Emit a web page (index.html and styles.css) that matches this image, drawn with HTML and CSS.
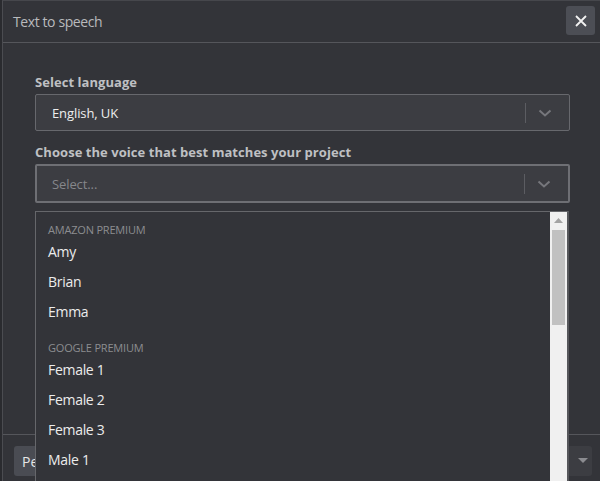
FILE: index.html
```html
<!DOCTYPE html>
<html>
<head>
<meta charset="utf-8">
<link rel="stylesheet" href="styles.css">
</head>
<body>
<div class="dialog">
  <div class="header">
    <div class="title">Text to speech</div>
    <button class="close" aria-label="Close">
      <svg width="14" height="14" viewBox="0 0 14 14"><path d="M2 2 L12 12 M12 2 L2 12" stroke="#f2f2f2" stroke-width="1.8" fill="none"/></svg>
    </button>
  </div>
  <div class="body">
    <div class="label">Select language</div>
    <div class="select">
      <div class="value">English, UK</div>
      <div class="sep"></div>
      <svg class="chev" width="14" height="8" viewBox="0 0 14 8"><path d="M1.5 1.5 L7 6.5 L12.5 1.5" stroke="#76777c" stroke-width="2" fill="none"/></svg>
    </div>
    <div class="label">Choose the voice that best matches your project</div>
    <div class="select focused">
      <div class="value placeholder">Select...</div>
      <div class="sep"></div>
      <svg class="chev" width="14" height="8" viewBox="0 0 14 8"><path d="M1.5 1.5 L7 6.5 L12.5 1.5" stroke="#76777c" stroke-width="2" fill="none"/></svg>
    </div>
  </div>
  <div class="footer">
    <button class="btn">Personal</button>
    <button class="btn-drop"><svg width="10" height="6" viewBox="0 0 10 6"><path d="M0 0 L10 0 L5 5 Z" fill="#8b8c90"/></svg></button>
  </div>
  <div class="menu">
    <div class="list">
      <div class="group">Amazon Premium</div>
      <div class="item">Amy</div>
      <div class="item">Brian</div>
      <div class="item">Emma</div>
      <div class="group">Google Premium</div>
      <div class="item">Female 1</div>
      <div class="item">Female 2</div>
      <div class="item">Female 3</div>
      <div class="item">Male 1</div>
    </div>
    <div class="scrollbar">
      <svg class="up" width="9" height="5" viewBox="0 0 9 5"><path d="M0 5 L4.5 0 L9 5 Z" fill="#a3a3a3"/></svg>
      <div class="thumb"></div>
    </div>
  </div>
</div>
</body>
</html>
```
FILE: styles.css
```css
* { box-sizing: border-box; }
html, body { margin: 0; padding: 0; }
body {
  background: #2a2b2f;
  width: 600px;
  height: 481px;
  overflow: hidden;
  font-family: "Open Sans", "Noto Sans", sans-serif;
}
.dialog {
  position: relative;
  margin-left: 2px;
  height: 481px;
  background: #333439;
  border-left: 1px solid #4b4c51;
  border-top: 1px solid #46474c;
  display: flex;
  flex-direction: column;
}
.header {
  height: 42px;
  border-bottom: 1px solid #55565b;
  display: flex;
  align-items: center;
  justify-content: space-between;
  padding: 0 5px 0 10px;
}
.title {
  color: #b9babd;
  font-size: 14px;
  letter-spacing: -0.4px;
  margin-top: -1px;
}
.close {
  width: 29px;
  height: 29px;
  border: none;
  border-radius: 3px;
  background: #4c4e55;
  display: flex;
  align-items: center;
  justify-content: center;
  padding: 0;
  margin-top: -2px;
}
.body {
  flex: 1;
  padding: 30px 30px 0 32px;
}
.label {
  color: #bfc0c3;
  font-size: 13px;
  font-weight: 700;
  letter-spacing: 0.05px;
  line-height: 18px;
  margin-bottom: 3px;
}
.select {
  height: 37px;
  background: #3c3d42;
  border: 1px solid #67686d;
  border-radius: 2px;
  display: flex;
  align-items: center;
  margin-bottom: 12px;
}
.select.focused {
  height: 39px;
  border: 2px solid #6e6f74;
}
.value {
  flex: 1;
  color: #eeeeee;
  font-size: 13px;
  letter-spacing: -0.1px;
  padding-left: 16px;
}
.focused .value { padding-left: 15px; }
.placeholder { color: #86878b; }
.sep {
  width: 1px;
  height: 20px;
  background: #5c5d62;
}
.chev {
  margin: 0 17px 0 12px;
}
.footer {
  height: 47px;
  border-top: 1px solid #55565b;
  display: flex;
  align-items: flex-start;
  justify-content: space-between;
  padding: 11px 8px 0 11px;
}
.btn {
  height: 30px;
  padding: 0 24px 0 8px;
  background: #4a4c53;
  color: #e6e6e6;
  border: none;
  border-radius: 3px;
  font-family: inherit;
  font-size: 14px;
}
.btn-drop {
  width: 25px;
  height: 30px;
  background: #3c3d42;
  border: none;
  border-radius: 3px;
  padding: 0 0 0 6px;
  display: flex;
  align-items: center;
  justify-content: center;
}
.menu {
  position: absolute;
  left: 32px;
  top: 210px;
  width: 534px;
  height: 290px;
  background: #333439;
  border: 1px solid #66676b;
  border-right: 2px solid #56575b;
  display: flex;
}
.list {
  flex: 1;
  padding: 10px 0 0 12px;
}
.group {
  color: #8c8d90;
  font-size: 11px;
  text-transform: uppercase;
  letter-spacing: -0.2px;
  height: 16px;
  line-height: 16px;
}
.item {
  color: #ececec;
  font-size: 14px;
  letter-spacing: -0.3px;
  height: 30px;
  line-height: 30px;
}
.item + .group { margin-top: 13px; }
.group + .item { margin-top: -1px; }
.scrollbar {
  width: 17px;
  background: #f0f0f0;
  position: relative;
  padding-top: 6px;
  display: flex;
  flex-direction: column;
  align-items: center;
}
.up { display: block; }
.thumb {
  margin-top: 7px;
  width: 13px;
  height: 95px;
  background: #c1c1c1;
}
```
